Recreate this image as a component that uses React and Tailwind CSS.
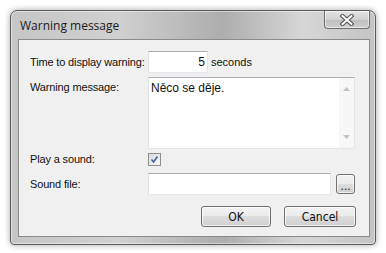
export default function App() {
  const font = { fontFamily: '"Liberation Sans", Arial, sans-serif' };
  const tb = "bg-white border border-[#e2e6ea] border-t-[#abadb3] border-l-[#dde1e6]";
  const btn = "flex items-center justify-center rounded-[3px] border border-[#707070] bg-[linear-gradient(180deg,#f2f2f2_0%,#ebebeb_49%,#dddddd_50%,#cfcfcf_100%)] shadow-[inset_0_0_0_1px_rgba(255,255,255,0.7)] text-[12px] text-[#111]";
  const lbl = "w-[118px] shrink-0 whitespace-nowrap tracking-[-0.15px]";
  return (
    <div className="w-[386px] h-[253px] bg-white p-[10px]" style={font}>
      <div className="w-[366px] h-[235px] flex flex-col rounded-t-[7px] rounded-b-[4px] border border-[#5a5a5a] bg-[linear-gradient(90deg,#c6c6c6_0%,#d0d0d0_30%,#adadad_58%,#d6d6d6_80%,#c4c4c4_100%)] shadow-[0_0_6px_rgba(0,0,0,0.35),inset_0_0_0_1px_rgba(255,255,255,0.45)]">
        <div className="h-[28px] flex items-start">
          <div className="pl-[9px] pt-[7px] text-[12px] leading-[16px] text-[#1a1a1a]" style={{ fontFamily: '"Open Sans", "Liberation Sans", sans-serif' }}>
            Warning message
          </div>
          <div className="ml-auto mr-[5px] w-[46px] h-[18px] rounded-b-[4px] border border-t-0 border-[#6e6e6e] bg-[linear-gradient(180deg,#e4e4e4_0%,#d0d0d0_50%,#bdbdbd_51%,#cfcfcf_100%)] shadow-[inset_0_0_0_1px_rgba(255,255,255,0.55)] flex items-center justify-center">
            <svg width="14" height="12" viewBox="0 0 14 12">
              <path d="M2.5 2 L11.5 10 M11.5 2 L2.5 10" stroke="#4b4b4b" strokeWidth="4" strokeLinecap="square" />
              <path d="M2.5 2 L11.5 10 M11.5 2 L2.5 10" stroke="#ffffff" strokeWidth="2" strokeLinecap="square" />
            </svg>
          </div>
        </div>
        <div className="flex-1 ml-[7px] mr-[5px] mb-[7px] bg-[#f0f0f0] border border-[#8a8a8a] pl-[11px] pr-[14px] pt-[11px] text-[11px] text-[#111] flex flex-col">
          <div className="flex items-center h-[22px]">
            <div className={lbl}>Time to display warning:</div>
            <div className={`${tb} w-[60px] h-[22px] flex items-center justify-end pr-[2px] text-[12px]`}>5</div>
            <div className="ml-[3px] pt-[1px]">seconds</div>
          </div>
          <div className="flex mt-[4px]">
            <div className={`${lbl} pt-[2px]`}>Warning message:</div>
            <div className={`${tb} flex-1 h-[72px] flex`}>
              <div className="flex-1 pl-[2px] pt-[3px] text-[12px] leading-[14px]">Něco se děje.</div>
              <div className="w-[15px] bg-[#f7f7f7] flex flex-col items-center justify-between py-[9px]">
                <svg width="7" height="4" viewBox="0 0 7 4"><path d="M0 4 L3.5 0 L7 4 Z" fill="#c2c2c2" /></svg>
                <svg width="7" height="4" viewBox="0 0 7 4"><path d="M0 0 L3.5 4 L7 0 Z" fill="#c2c2c2" /></svg>
              </div>
            </div>
          </div>
          <div className="flex items-center mt-[4px] h-[13px]">
            <div className={lbl}>Play a sound:</div>
            <div className="w-[13px] h-[13px] border border-[#8e8f8f] bg-[linear-gradient(135deg,#dcdcdc_0%,#f8f8f8_100%)] flex items-center justify-center">
              <svg width="9" height="9" viewBox="0 0 9 9">
                <path d="M1.5 4.5 L3.5 7 L7.5 1.5" stroke="#3b5aa8" strokeWidth="1.5" fill="none" />
              </svg>
            </div>
          </div>
          <div className="flex items-center mt-[7px] h-[22px]">
            <div className={lbl}>Sound file:</div>
            <div className={`${tb} w-[185px] h-[22px]`}></div>
            <div className={`${btn} ml-[5px] w-[19px] h-[20px] text-[9px] leading-none pb-[1px] items-end`}>...</div>
          </div>
          <div className="flex justify-end mt-[11px] mr-[-1px]">
            <div className={`${btn} w-[70px] h-[21px]`} style={{ fontFamily: '"DejaVu Sans Condensed", "DejaVu Sans", sans-serif' }}>OK</div>
            <div className={`${btn} ml-[13px] w-[72px] h-[21px]`} style={{ fontFamily: '"DejaVu Sans Condensed", "DejaVu Sans", sans-serif' }}>Cancel</div>
          </div>
        </div>
      </div>
    </div>
  );
}
